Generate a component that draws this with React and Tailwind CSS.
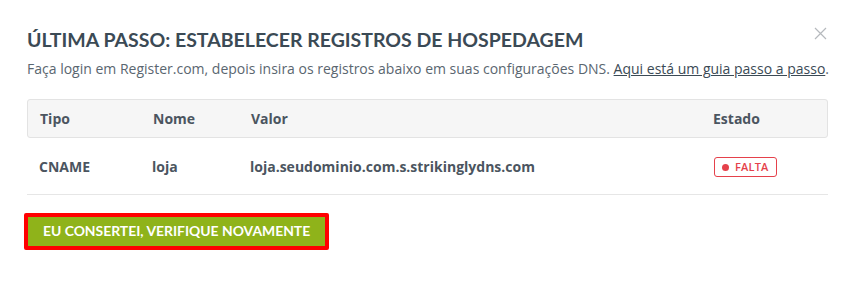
import React from 'react'

const heading = { fontFamily: 'Lato, "Open Sans", sans-serif' }

export default function App() {
  return (
    <div className="relative w-[853px] h-[289px] bg-white font-['Open_Sans',sans-serif]">
      {/* Close */}
      <button className="absolute right-[26px] top-[27px] text-[#b5b9bd]" aria-label="Fechar">
        <svg width="13" height="13" viewBox="0 0 13 13" fill="none" stroke="currentColor" strokeWidth="1.2">
          <path d="M1 1L12 12M12 1L1 12" />
        </svg>
      </button>

      <div className="pl-[27px] pr-[25px] pt-[27px]">
        <h2 className="text-[19.5px] leading-[26px] font-bold text-[#3b4a55]" style={heading}>
          ÚLTIMA PASSO: ESTABELECER REGISTROS DE HOSPEDAGEM
        </h2>
        <p className="mt-[6px] text-[14px] leading-[20px] text-[#5a6670] whitespace-nowrap">
          Faça login em Register.com, depois insira os registros abaixo em suas configurações DNS.{' '}
          <a className="underline text-[#3b4a55]" href="#">Aqui está um guia passo a passo</a>.
        </p>

        {/* Records table */}
        <div className="mt-[20px]">
          <div className="flex items-center h-[39px] bg-[#f6f6f6] border border-[#e3e3e3] rounded-[3px] text-[14px] font-bold text-[#4b5560]">
            <div className="w-[125px] pl-[12px]">Tipo</div>
            <div className="w-[98px]">Nome</div>
            <div className="flex-1">Valor</div>
            <div className="w-[114px]">Estado</div>
          </div>
          <div className="flex items-center h-[57px] border-b border-[#e6e6e6] text-[14px] font-bold text-[#4b5560]">
            <div className="w-[125px] pl-[12px]">CNAME</div>
            <div className="w-[98px]">loja</div>
            <div className="flex-1">loja.seudominio.com.s.strikinglydns.com</div>
            <div className="w-[114px]">
              <span className="inline-flex items-center gap-[6px] h-[20px] px-[7px] border border-[#e5414b] rounded-[3px] text-[#e5414b] text-[11px] font-semibold tracking-[0.2px]">
                <span className="w-[7px] h-[7px] rounded-full bg-[#e5414b]" />
                FALTA
              </span>
            </div>
          </div>
        </div>

        {/* Action */}
        <div className="mt-[18px] -ml-[3px]">
          <div className="inline-block border-[4px] border-[#ff0000] rounded-[2px]">
            <button
              className="block h-[29px] px-[15px] bg-[#8fb31a] text-white text-[13.9px] font-bold"
              style={heading}
            >
              EU CONSERTEI, VERIFIQUE NOVAMENTE
            </button>
          </div>
        </div>
      </div>
    </div>
  )
}
